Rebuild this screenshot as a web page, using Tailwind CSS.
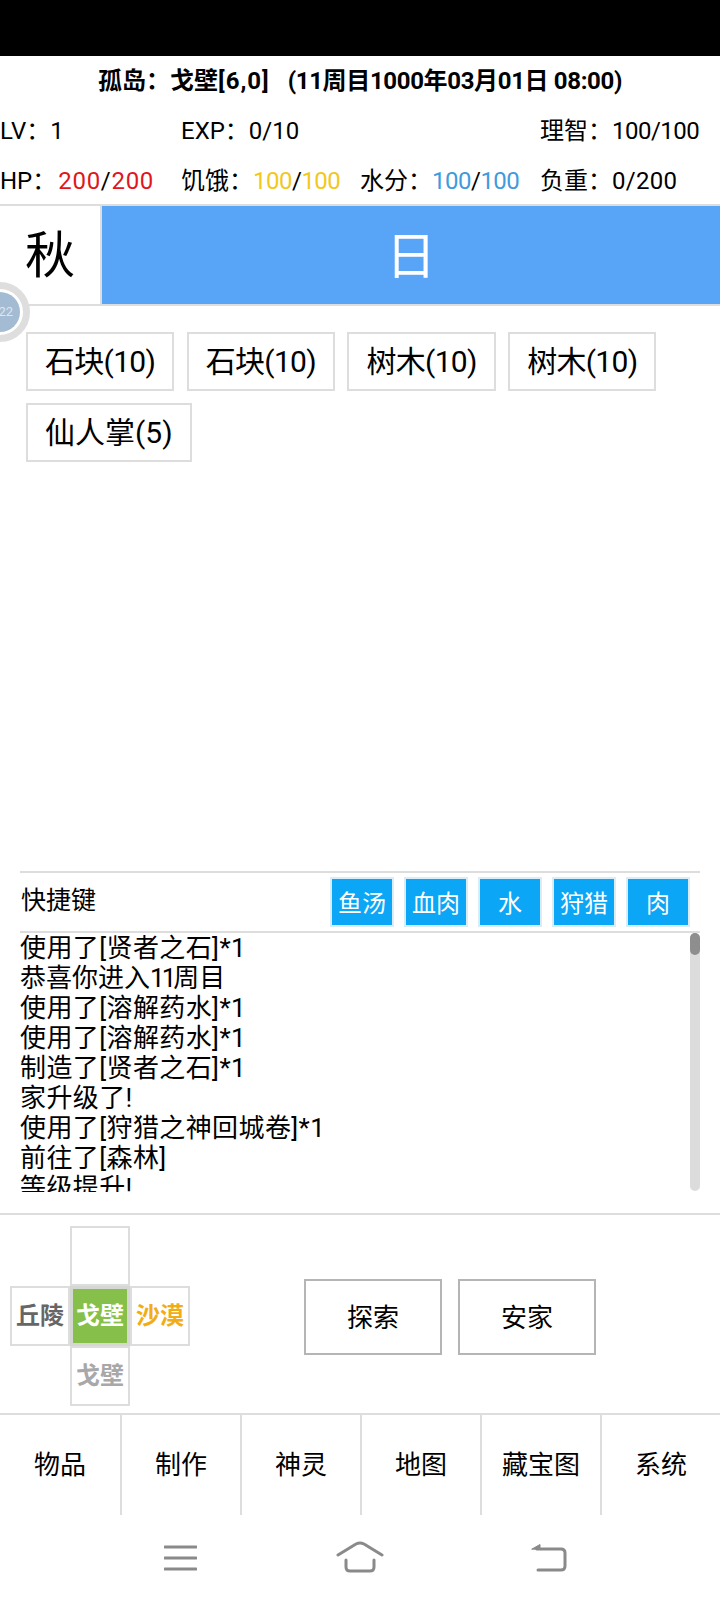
<!DOCTYPE html>
<html lang="zh">
<head>
<meta charset="utf-8">
<script src="https://cdn.jsdelivr.net/npm/@tailwindcss/browser@4"></script>
</head>
<body class="bg-white">
<div class="relative w-[720px] h-[1600px] overflow-hidden bg-white text-black font-['Roboto','Noto_Sans_CJK_SC',sans-serif] flex flex-col">
  <div class="h-[56px] bg-black shrink-0"></div>

  <div class="h-[48px] shrink-0 pt-[1px] flex items-center justify-center text-[24px] font-bold whitespace-pre"><span>孤岛：戈壁<span class="tracking-[1px]">[6,0]</span></span><span class="w-[18px]"></span><span class="tracking-[-0.35px]">(11周目1000年03月01日 08:00)</span></div>

  <div class="grid grid-cols-4 text-[24px] h-[50px] pt-[4px] shrink-0 items-center whitespace-nowrap">
    <div>LV：1</div><div class="pl-[1px]">EXP：0/10</div><div></div><div>理智：<span class="tracking-[-0.5px]">100/100</span></div>
  </div>
  <div class="grid grid-cols-4 text-[24px] h-[50px] pt-[4px] shrink-0 items-center whitespace-nowrap">
    <div>HP：<span class="tracking-[0.7px] ml-[2px]"><span class="text-[#e0161d]">200</span>/<span class="text-[#e0161d]">200</span></span></div>
    <div class="pl-[1px]">饥饿：<span class="tracking-[-0.5px]"><span class="text-[#f2c81e]">100</span>/<span class="text-[#f2c81e]">100</span></span></div>
    <div>水分：<span class="tracking-[-0.5px]"><span class="text-[#3f9bdc]">100</span>/<span class="text-[#3f9bdc]">100</span></span></div>
    <div>负重：<span class="tracking-[0.3px]">0/200</span></div>
  </div>

  <div class="h-[102px] shrink-0 flex border-y-2 border-[#dddddd]">
    <div class="w-[102px] shrink-0 pt-[2px] flex items-center justify-center text-[50px] border-r-2 border-[#dddddd]">秋</div>
    <div class="flex-1 pt-[5px] bg-[#58a5f8] flex items-center justify-center text-[50px] text-white">日</div>
  </div>

  <div class="h-[565px] shrink-0 pt-[26px] pl-[26px] flex flex-wrap content-start gap-x-[12.5px] gap-y-[12px] text-[30px] tracking-[-0.7px]">
    <div class="h-[59px] px-[17px] flex items-center border-2 border-[#dddddd]">石块(10)</div>
    <div class="h-[59px] px-[17px] flex items-center border-2 border-[#dddddd]">石块(10)</div>
    <div class="h-[59px] px-[17px] flex items-center border-2 border-[#dddddd]">树木(10)</div>
    <div class="h-[59px] px-[17px] flex items-center border-2 border-[#dddddd]">树木(10)</div>
    <div class="h-[59px] px-[17px] flex items-center border-2 border-[#dddddd] tracking-normal">仙人掌(5)</div>
  </div>

  <div class="mx-[20px] h-[62px] shrink-0 flex items-center justify-between border-y-2 border-[#dddddd] pr-[10px]">
    <div class="text-[25px] -mt-[2px] pl-[1px]">快捷键</div>
    <div class="flex gap-[10px] text-[24px] text-white">
      <div class="w-[64px] h-[50px] pt-[3px] flex items-center justify-center bg-[#0ba6f5] border-2 border-[#d9ecf8]">鱼汤</div>
      <div class="w-[64px] h-[50px] pt-[3px] flex items-center justify-center bg-[#0ba6f5] border-2 border-[#d9ecf8]">血肉</div>
      <div class="w-[64px] h-[50px] pt-[3px] flex items-center justify-center bg-[#0ba6f5] border-2 border-[#d9ecf8]">水</div>
      <div class="w-[64px] h-[50px] pt-[3px] flex items-center justify-center bg-[#0ba6f5] border-2 border-[#d9ecf8]">狩猎</div>
      <div class="w-[64px] h-[50px] pt-[3px] flex items-center justify-center bg-[#0ba6f5] border-2 border-[#d9ecf8]">肉</div>
    </div>
  </div>

  <div class="mx-[20px] h-[259px] shrink-0 flex justify-between">
    <div class="h-[259px] overflow-hidden text-[26px] tracking-[0.4px] leading-[30px] whitespace-nowrap">
      <div>使用了[贤者之石]*1</div>
      <div class="tracking-normal">恭喜你进入<span class="tracking-[-3px]">11</span>周目</div>
      <div>使用了[溶解药水]*1</div>
      <div>使用了[溶解药水]*1</div>
      <div>制造了[贤者之石]*1</div>
      <div>家升级了!</div>
      <div>使用了[狩猎之神回城卷]*1</div>
      <div>前往了[森林]</div>
      <div>等级提升!</div>
    </div>
    <div class="w-[10px] h-[258px] bg-[#dcdcdc] rounded-[5px]">
      <div class="w-[10px] h-[22px] bg-[#8e8e8e] rounded-[5px]"></div>
    </div>
  </div>

  <div class="h-[21px] shrink-0"></div>
  <div class="h-[202px] shrink-0 border-y-2 border-[#dddddd] flex items-center">
    <div class="w-[304px] shrink-0 pl-[10px] mt-[3px]">
      <div class="grid grid-cols-[60px_60px_60px] grid-rows-[60px_60px_60px] text-[24px] font-bold">
        <div></div>
        <div class="border-2 border-[#dddddd]"></div>
        <div></div>
        <div class="flex items-center justify-center border-2 border-[#dddddd] text-[#666666]">丘陵</div>
        <div class="flex items-center justify-center border-[3px] border-[#d5d8d2] bg-[#86c04a] text-white">戈壁</div>
        <div class="flex items-center justify-center border-2 border-[#dddddd] text-[#f2ad15]">沙漠</div>
        <div></div>
        <div class="flex items-center justify-center border-2 border-[#dddddd] text-[#a8a8a8]">戈壁</div>
        <div></div>
      </div>
    </div>
    <div class="flex gap-[16px] text-[26px] mt-[5px]">
      <div class="w-[138px] h-[76px] pt-[3px] flex items-center justify-center border-2 border-[#b5b5b5]">探索</div>
      <div class="w-[138px] h-[76px] pt-[3px] flex items-center justify-center border-2 border-[#b5b5b5]">安家</div>
    </div>
  </div>

  <div class="h-[100px] shrink-0 grid grid-cols-6 text-[26px]">
    <div class="flex items-center justify-center">物品</div>
    <div class="flex items-center justify-center border-l-2 border-[#dddddd]">制作</div>
    <div class="flex items-center justify-center border-l-2 border-[#dddddd]">神灵</div>
    <div class="flex items-center justify-center border-l-2 border-[#dddddd]">地图</div>
    <div class="flex items-center justify-center border-l-2 border-[#dddddd]">藏宝图</div>
    <div class="flex items-center justify-center border-l-2 border-[#dddddd]">系统</div>
  </div>

  <div class="flex-1 flex items-start pt-[30px] pl-[164px]">
    <svg width="33" height="26" viewBox="0 0 33 26" class="shrink-0" fill="none" stroke="#8a8a8a" stroke-width="3" stroke-linecap="round"><path d="M1 2H32M1 13H32M1 24H32"/></svg>
    <svg width="48" height="32" viewBox="0 0 48 32" class="shrink-0 ml-[139px] -mt-[4px]" fill="none" stroke="#8a8a8a" stroke-width="3" stroke-linecap="round" stroke-linejoin="round"><path d="M2 14L20 3Q24 1 28 3L46 14"/><path d="M10 19V26Q10 30 14 30H34Q38 30 38 26V19"/></svg>
    <svg width="36" height="30" viewBox="0 0 36 30" class="shrink-0 ml-[147px] -mt-[2px]" fill="none" stroke="#8a8a8a" stroke-width="3" stroke-linecap="round" stroke-linejoin="round"><path d="M6 6H30Q34 6 34 10V23Q34 27 30 27H7"/><path d="M1 6L9 1.5V6Z" fill="#8a8a8a" stroke-width="1"/></svg>
  </div>

  <div class="absolute left-[-30px] top-[282px] w-[60px] h-[60px] rounded-full border-[7px] border-[#dedede] bg-white flex items-center justify-center">
    <div class="w-[40px] h-[40px] rounded-full bg-[#a3bbd3] flex items-center justify-end pr-[7px] text-[13px] text-[#dde5ee]">22</div>
  </div>
</div>
</body>
</html>
